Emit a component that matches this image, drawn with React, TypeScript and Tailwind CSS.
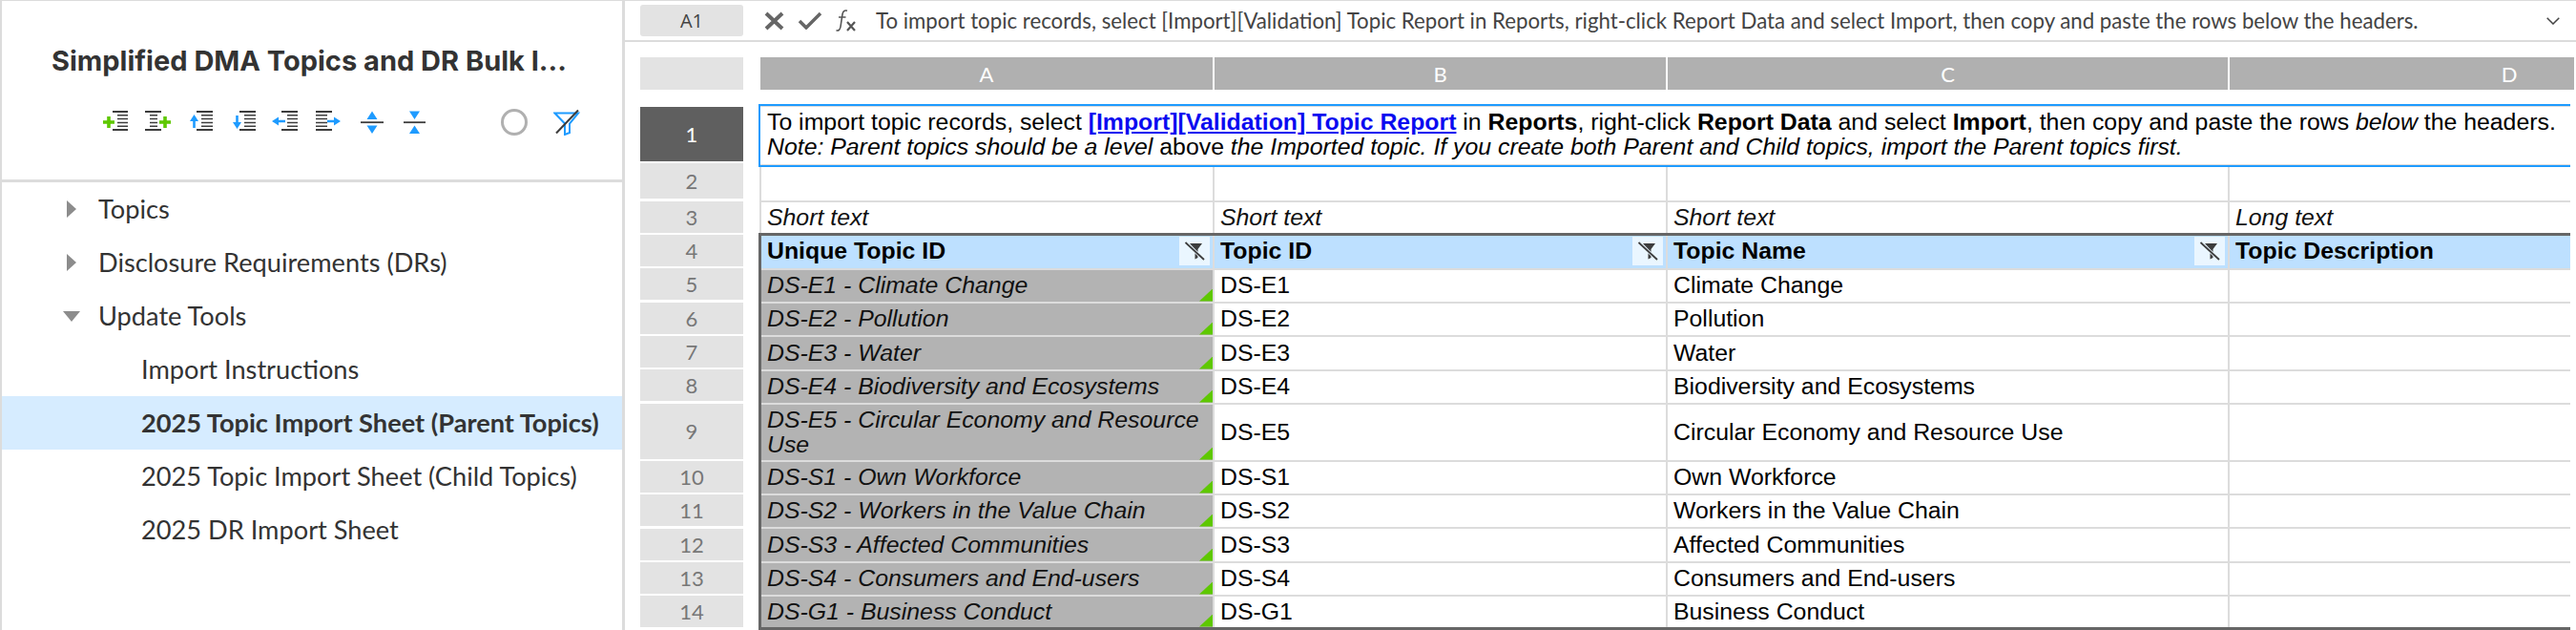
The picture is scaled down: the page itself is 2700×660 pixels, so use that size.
import React from 'react';

const BLUE = '#1e9bff';
const GREEN = '#5ec800';

// shared stripes for the row/indent icons
function Stripes({ x1, x2, mx1, mx2 }: { x1: number; x2: number; mx1: number; mx2: number }) {
  return (
    <g stroke="#3c3c3c">
      <path d={`M${x1} 3H${x2}M${x1} 22H${x2}`} strokeWidth="2" />
      <path d={`M${mx1} 6.8H${mx2}M${mx1} 10.6H${mx2}M${mx1} 14.4H${mx2}M${mx1} 18.2H${mx2}`} strokeWidth="1.5" />
    </g>
  );
}

function Icon({ children }: { children: React.ReactNode }) {
  return (
    <svg width="32" height="28" viewBox="0 0 32 28" className="shrink-0">
      {children}
    </svg>
  );
}

function Toolbar() {
  return (
    <div className="flex items-center pl-[100px] mt-[30px]">
      <div className="flex gap-[12.6px]">
        <Icon>
          <Stripes x1={16} x2={32} mx1={21} mx2={32} />
          <path d="M6 12.2h4.2V8h3.6v4.2H18v3.6h-4.2V20h-3.6v-4.2H6z" fill={GREEN} />
        </Icon>
        <Icon>
          <Stripes x1={5} x2={22} mx1={10} mx2={18} />
          <path d="M20 12.2h4.2V8h3.6v4.2H32v3.6h-4.2V20h-3.6v-4.2H20z" fill={GREEN} />
        </Icon>
        <Icon>
          <Stripes x1={15} x2={32} mx1={20} mx2={32} />
          <path d="M12.5 6L17 13h-3.2v7h-2.6v-7H8z" fill={BLUE} />
        </Icon>
        <Icon>
          <Stripes x1={15} x2={32} mx1={20} mx2={32} />
          <path d="M12.5 21L17 14h-3.2V7h-2.6v7H8z" fill={BLUE} />
        </Icon>
        <Icon>
          <Stripes x1={15} x2={32} mx1={21} mx2={32} />
          <path d="M5 13l7-4.5v3.2h7v2.6h-7v3.2z" fill={BLUE} />
        </Icon>
        <Icon>
          <Stripes x1={6} x2={23} mx1={6} mx2={18} />
          <path d="M32 13l-7-4.5v3.2h-7v2.6h7v3.2z" fill={BLUE} />
        </Icon>
        <Icon>
          <path d="M20 2.5L25.5 11h-11zM20 26l5.5-8.5h-11z" fill={BLUE} />
          <path d="M8 14.2H32" stroke="#3c3c3c" strokeWidth="1.8" />
        </Icon>
        <Icon>
          <path d="M20.5 11L26 2.5H15zM20.5 17.5L26 26H15z" fill={BLUE} />
          <path d="M9 14.2H32" stroke="#3c3c3c" strokeWidth="1.8" />
        </Icon>
      </div>
      <div className="ml-[79px] w-[28px] h-[28px] rounded-full border-[3px] border-[#b0b0b0]" />
      <svg width="28" height="28" viewBox="0 0 28 28" className="ml-[27px] shrink-0">
        <path d="M1.5 4.5H26L17 15.5V25L12 27V15.5z" fill="none" stroke={BLUE} strokeWidth="2" />
        <path d="M3 25.5L26 1.5" stroke="#3c3c3c" strokeWidth="2" />
      </svg>
    </div>
  );
}

function TreeRow({ label, open, child, active }: { label: string; open?: boolean; child?: boolean; active?: boolean }) {
  return (
    <div className={`h-[56px] flex items-center text-[#333] whitespace-nowrap ${child ? 'pl-[146px]' : 'pl-[64px]'} ${active ? 'bg-[#d6ecff] font-bold' : ''}`}>
      {!child && (
        <span className="w-[18px] mr-[19px] flex justify-center">
          {open ? (
            <svg width="18" height="11" viewBox="0 0 18 11"><path d="M0 0H18L9 11z" fill="#8c8c8c" /></svg>
          ) : (
            <svg width="10" height="18" viewBox="0 0 10 18"><path d="M0 0L10 9L0 18z" fill="#8c8c8c" /></svg>
          )}
        </span>
      )}
      <span>{label}</span>
    </div>
  );
}

function Sidebar() {
  return (
    <div className="w-[655px] shrink-0 border-l-2 border-r-[3px] border-[#dcdcdc] flex flex-col font-['Lato',sans-serif] text-[27.2px]">
      <div className="h-[190px] shrink-0 border-b-[3px] border-[#dcdcdc] pt-[43px]">
        <div className="pl-[52px] font-['Inter',sans-serif] font-bold text-[29px] leading-[40px] text-[#333] whitespace-nowrap">
          Simplified DMA Topics and DR Bulk I...
        </div>
        <Toolbar />
      </div>
      <TreeRow label="Topics" />
      <TreeRow label="Disclosure Requirements (DRs)" />
      <TreeRow label="Update Tools" open />
      <TreeRow label="Import Instructions" child />
      <TreeRow label="2025 Topic Import Sheet (Parent Topics)" child active />
      <TreeRow label="2025 Topic Import Sheet (Child Topics)" child />
      <TreeRow label="2025 DR Import Sheet" child />
    </div>
  );
}

function FormulaBar() {
  return (
    <div className="h-[43px] shrink-0 border-b-2 border-[#dcdcdc] flex items-center pl-[16px] pr-[17px]">
      <div className="w-[108px] h-[33px] rounded-[3px] bg-[#e3e3e3] flex items-center justify-center font-['Open_Sans',sans-serif] text-[20px] text-[#444]">
        A1
      </div>
      <svg width="21" height="20" viewBox="0 0 21 20" className="ml-[22px] shrink-0">
        <path d="M2 2L19 18M19 2L2 18" stroke="#666" strokeWidth="4" />
      </svg>
      <svg width="26" height="19" viewBox="0 0 26 19" className="ml-[14px] shrink-0">
        <path d="M2 10L9 17L24 2" fill="none" stroke="#666" strokeWidth="3.5" />
      </svg>
      <svg width="21" height="23" viewBox="0 0 21 23" className="ml-[14px] shrink-0">
        <path d="M12 1.2C9 .4 7.6 1.8 7 5L5 18C4.500 21 3 22.500 .5 21.800M3 8H10.500" fill="none" stroke="#555" strokeWidth="1.6" />
        <path d="M12 13L20 22M20 13L12 22" stroke="#555" strokeWidth="2.2" />
      </svg>
      <div className="ml-[21px] flex-1 font-['Lato',sans-serif] text-[22.24px] text-[#444] whitespace-nowrap">
        To import topic records, select [Import][Validation] Topic Report in Reports, right-click Report Data and select Import, then copy and paste the rows below the headers.
      </div>
      <svg width="14" height="8" viewBox="0 0 14 8" className="shrink-0">
        <path d="M.7 .7L7 7L13.300 .7" fill="none" stroke="#444" strokeWidth="1.5" />
      </svg>
    </div>
  );
}

function RowHead({ n, className }: { n: number; className: string }) {
  return (
    <div className={`flex items-center justify-center bg-[#e3e3e3] text-[#777] ${className}`}>{n}</div>
  );
}

function RowHeads() {
  return (
    <div className="w-[108px] shrink-0 flex flex-col gap-[2.33px] font-['Lato',sans-serif] text-[22px]">
      <div className="h-[34px] bg-[#e3e3e3] mb-[15.67px]" />
      <div className="h-[57px] flex items-center justify-center bg-[#5f5f5f] text-white">1</div>
      <RowHead n={2} className="h-[37px]" />
      {[3, 4, 5, 6, 7, 8].map((n) => (
        <RowHead key={n} n={n} className="h-[33px]" />
      ))}
      <RowHead n={9} className="h-[58px]" />
      {[10, 11, 12, 13, 14].map((n) => (
        <RowHead key={n} n={n} className="h-[33px]" />
      ))}
    </div>
  );
}

function FilterButton() {
  return (
    <div className="w-[32px] h-[30px] mt-[1px] bg-[#eaf6ff] flex items-center justify-center shrink-0">
      <svg width="24" height="22" viewBox="0 0 24 22">
        <path d="M7 3H20L15.500 9V18L12.500 19.500V9z" fill="#3c3c3c" />
        <path d="M2.500 2L22 20" stroke="#eaf6ff" strokeWidth="3.500" />
        <path d="M2.500 2L22 20" stroke="#3c3c3c" strokeWidth="1.800" />
      </svg>
    </div>
  );
}

const UPPER = "grid grid-cols-[478px_475px_589px_586px] w-[2128px]";
const TABLE = "grid grid-cols-[475px_475px_589px_586px] w-[2125px]";
const CELL = "border-r-2 border-b-2 border-[#dcdcdc] pl-[6px] flex items-center whitespace-nowrap";

function TypeRow() {
  return (
    <div className={`${UPPER} h-[31.500px] italic text-[#111]`}>
      <div className="ml-[1px] border-l-2 border-r-2 border-[#dcdcdc] pl-[6px] flex items-end pb-[3px]">Short text</div>
      <div className="border-r-2 border-[#dcdcdc] pl-[6px] flex items-end pb-[3px]">Short text</div>
      <div className="border-r-2 border-[#dcdcdc] pl-[6px] flex items-end pb-[3px]">Short text</div>
      <div className="pl-[6px] flex items-end pb-[3px]">Long text</div>
    </div>
  );
}

function HeaderRow() {
  const cell = "bg-[#bde0ff] border-r-2 border-b-2 border-[#dcdcdc] font-bold flex justify-between leading-[32px] whitespace-nowrap pr-[3px]";
  return (
    <div className={`${TABLE} h-[36px] text-black`}>
      <div className={`${cell} pl-[6px]`}>Unique Topic ID<FilterButton /></div>
      <div className={`${cell} pl-[6px]`}>Topic ID<FilterButton /></div>
      <div className={`${cell} pl-[6px]`}>Topic Name<FilterButton /></div>
      <div className={`${cell} pl-[6px]`}>Topic Description</div>
    </div>
  );
}

interface Topic {
  id: string;
  name: string;
  h: string;
  wrap?: boolean;
  last?: boolean;
}

const TOPICS: Topic[] = [
  { id: 'DS-E1', name: 'Climate Change', h: 'h-[35px]' },
  { id: 'DS-E2', name: 'Pollution', h: 'h-[35px]' },
  { id: 'DS-E3', name: 'Water', h: 'h-[36px]' },
  { id: 'DS-E4', name: 'Biodiversity and Ecosystems', h: 'h-[35px]' },
  { id: 'DS-E5', name: 'Circular Economy and Resource Use', h: 'h-[60px]', wrap: true },
  { id: 'DS-S1', name: 'Own Workforce', h: 'h-[35px]' },
  { id: 'DS-S2', name: 'Workers in the Value Chain', h: 'h-[35px]' },
  { id: 'DS-S3', name: 'Affected Communities', h: 'h-[36px]' },
  { id: 'DS-S4', name: 'Consumers and End-users', h: 'h-[35px]' },
  { id: 'DS-G1', name: 'Business Conduct', h: 'h-[32px]', last: true },
];

function TopicRow({ t }: { t: Topic }) {
  const line = t.last ? 'border-r-2 border-[#dcdcdc]' : 'border-r-2 border-b-2 border-[#dcdcdc]';
  return (
    <div className={`${TABLE} ${t.h} text-black`}>
      <div className={`relative bg-[#b3b3b3] bg-clip-padding italic text-[#111] pl-[6px] flex items-center ${line} ${t.wrap ? '' : 'whitespace-nowrap'}`}>
        {t.id} - {t.name}
        <div className="absolute right-0 bottom-0 w-[14px] h-[13px] bg-[#5ec800] [clip-path:polygon(100%_0,100%_100%,0_100%)]" />
      </div>
      <div className={`pl-[6px] flex items-center ${line}`}>{t.id}</div>
      <div className={`pl-[6px] flex items-center ${line}`}>{t.name}</div>
      <div className={`pl-[6px] flex items-center ${line}`} />
    </div>
  );
}

function Sheet() {
  return (
    <div className="w-[1903px] shrink-0 ml-[16px] overflow-hidden">
      <div className="ml-[2px] h-[34px] grid grid-cols-[476px_475px_589px_586px] w-[2126px] font-['Lato',sans-serif] text-[22px] text-white">
        <div className="bg-[#b0b0b0] border-r-2 border-white flex items-center justify-center">A</div>
        <div className="bg-[#b0b0b0] border-r-2 border-white flex items-center justify-center">B</div>
        <div className="bg-[#b0b0b0] border-r-2 border-white flex items-center justify-center">C</div>
        <div className="bg-[#b0b0b0] flex items-center justify-center">D</div>
      </div>
      <div className="w-[1899px] mt-[15px] overflow-hidden font-['Liberation_Sans',Arial,sans-serif] text-[24.84px] leading-[25.500px]">
        <div className="w-[2128px] h-[65.500px] border-2 border-[#1e9bff]">
          <div className="h-full border-y border-[#dcdcdc] pl-[7px] pt-[3px] text-black whitespace-nowrap">
            <div>
              To import topic records, select{' '}
              <span className="font-bold text-[#0b0bf0] underline">[Import][Validation] Topic Report</span> in{' '}
              <span className="font-bold">Reports</span>, right-click <span className="font-bold">Report Data</span> and select{' '}
              <span className="font-bold">Import</span>, then copy and paste the rows <span className="italic">below</span> the headers.
            </div>
            <div className="italic">
              Note: Parent topics should be a level <span className="not-italic">above</span> the Imported topic. If you create both Parent and Child topics, import the Parent topics first.
            </div>
          </div>
        </div>
        <div className={`${UPPER} h-[37.500px]`}>
          <div className={`${CELL} ml-[1px] border-l-2`} />
          <div className={CELL} />
          <div className={CELL} />
          <div className={CELL} />
        </div>
        <TypeRow />
        <div className="border-t-[3.500px] border-l-[3px] border-b-[3px] border-[#666]">
          <HeaderRow />
          {TOPICS.map((t) => (
            <TopicRow key={t.id} t={t} />
          ))}
        </div>
      </div>
    </div>
  );
}

export default function App() {
  return (
    <div className="w-[2700px] h-[660px] overflow-hidden bg-white border-t border-[#dcdcdc] flex">
      <Sidebar />
      <div className="flex-1 min-w-0 flex flex-col">
        <FormulaBar />
        <div className="flex pl-[16px] pt-[16px]">
          <RowHeads />
          <Sheet />
        </div>
      </div>
    </div>
  );
}
